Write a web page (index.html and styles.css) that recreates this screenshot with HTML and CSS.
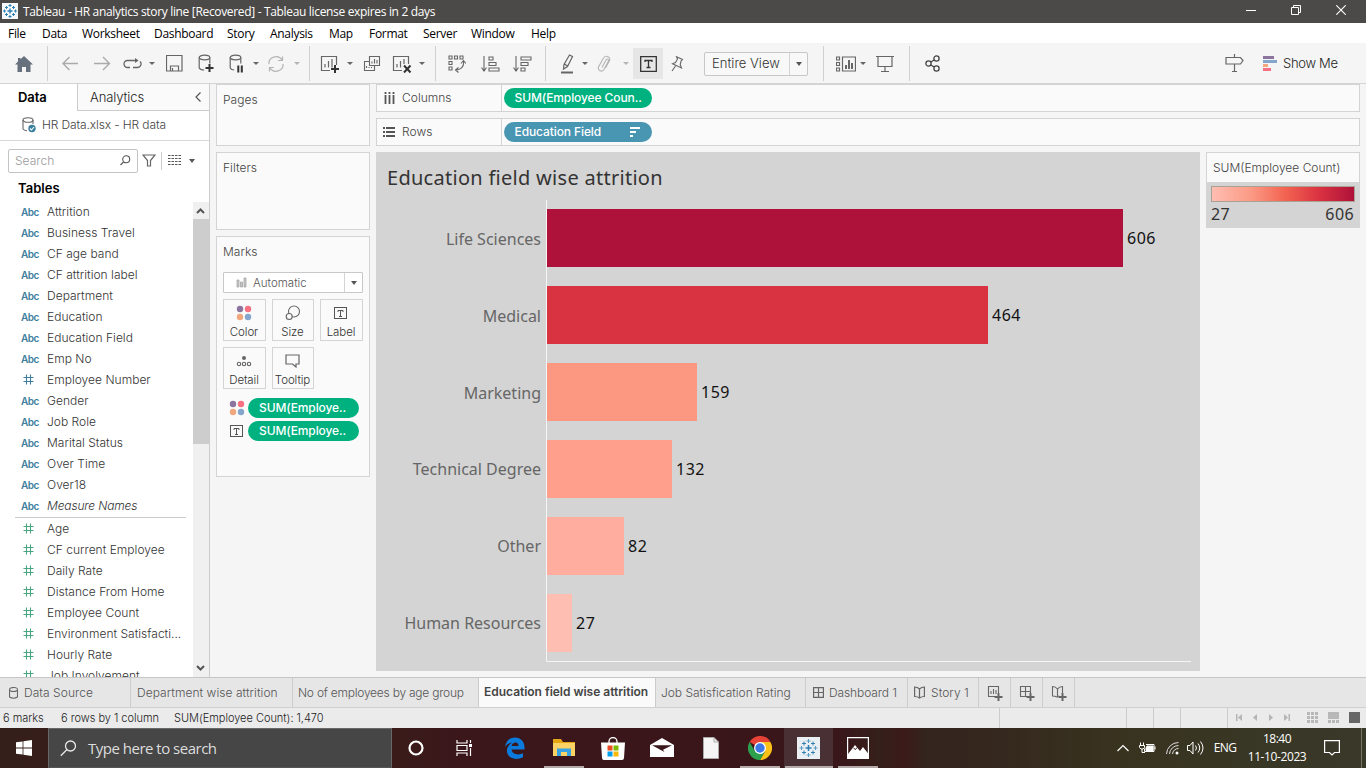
FILE: index.html
```html
<!DOCTYPE html>
<html lang="en">
<head>
<meta charset="utf-8">
<title>Tableau - HR analytics story line</title>
<link rel="stylesheet" href="styles.css">
</head>
<body>
<svg class="defs" width="0" height="0">
  <symbol id="logo" viewBox="0 0 20 20"><path d="M10 7v6M7 10h6" stroke="#2b7fb5" stroke-width="1.5"/><path d="M10 1v4M8 3h4M10 15v4M8 17h4M1 10h4M3 8v4M15 10h4M17 8v4" stroke="#5b9cc4"/><path d="M5.5 3.5v4M3.5 5.5h4M14.500 3.500v4M12.500 5.500h4M5.500 12.500v4M3.500 14.500h4M14.500 12.500v4M12.500 14.500h4" stroke="#357fae"/></symbol>
  <symbol id="num" viewBox="0 0 11 11"><path d="M3.500 .5v10M7.500 .5v10M.5 3.500h10M.5 7.500h10" fill="none" stroke="currentColor" stroke-width="1.100"/></symbol>
  <symbol id="dots" viewBox="0 0 16 16"><circle cx="4" cy="4" r="3.200" fill="#8b759e"/><circle cx="12" cy="4" r="3.200" fill="#f87182"/><circle cx="4" cy="12" r="3.200" fill="#f1a77e"/><circle cx="12" cy="12" r="3.200" fill="#84a6cc"/></symbol>
  <symbol id="tbox" viewBox="0 0 14 14"><rect x=".5" y="1.500" width="12" height="11" fill="none" stroke="#555"/><path d="M4 6V4.500h5V6M6.500 4.500v6M5 10.500h3" fill="none" stroke="#555"/></symbol>
</svg>
<div class="app">
  <header class="title-bar">
    <span class="title-logo"><svg width="14" height="14" viewBox="0 0 14 14" fill="none" stroke="#2f80b2"><path d="M7 4.500v5M4.500 7h5" stroke-width="1.400"/><path d="M7 0v3M5.500 1.500h3M7 11v3M5.500 12.500h3M0 7h3M1.500 5.500v3M11 7h3M12.500 5.500v3M3.500 2v3M2 3.500h3M10.500 2v3M9 3.500h3M3.500 9v3M2 10.500h3M10.500 9v3M9 10.500h3"/></svg></span>
    <span class="title-text">Tableau - HR analytics story line [Recovered] - Tableau license expires in 2 days</span>
    <div class="window-buttons">
      <svg width="10" height="10"><path d="M0 5.500h10" stroke="#fff"/></svg>
      <svg width="10" height="10" fill="none" stroke="#fff"><path d="M.5 2.500h7v7h-7zM2.500 2.500v-2h7v7h-2"/></svg>
      <svg width="10" height="10"><path d="M.3.3l9.400 9.400M9.700.3L.3 9.700" stroke="#fff" stroke-width="1.100"/></svg>
    </div>
  </header>
  <nav class="menu"><span>File</span><span>Data</span><span>Worksheet</span><span>Dashboard</span><span>Story</span><span>Analysis</span><span>Map</span><span>Format</span><span>Server</span><span>Window</span><span>Help</span></nav>
  <div class="toolbar">
    <div class="group g-home"><svg width="18" height="16"><path d="M9 0l9 8.500h-2.500V16H11v-5H7v5H2.500V8.500H0L3 5.500V2h2.500v1.300z" fill="#66717d"/></svg></div>
    <div class="group g-data">
      <svg width="17" height="15" fill="none" stroke="#aaa" stroke-width="1.400"><path d="M16 7.500H1M7.500 1L1 7.500 7.500 14"/></svg>
      <svg width="17" height="15" fill="none" stroke="#aaa" stroke-width="1.400"><path d="M0 7.500h15.500M9 1l6.500 6.500L9 14"/></svg>
      <svg width="19" height="12" fill="none" stroke="#666" stroke-width="1.300"><path d="M7 9.500H4.500A3.500 3.500 0 014.500 2.500h10M10 9.500h4.500A3.500 3.500 0 0017 3.500"/><path d="M12 0v5l3.500-2.500z" fill="#666" stroke="none"/></svg>
      <i class="caret"></i>
      <svg width="17" height="17" fill="none" stroke="#666" stroke-width="1.200"><path d="M.5.500h15.500v15.500H.5zM4.500 16v-5h8v5M6.500 16v-3"/></svg>
      <svg width="17" height="19" fill="none" stroke="#666" stroke-width="1.200"><ellipse cx="6.500" cy="3.500" rx="5.300" ry="2.300"/><path d="M1.200 3.500V14q1 2 5 2M11.800 3.500v6"/><path d="M11.500 10v8M7.500 14h8" stroke="#333" stroke-width="2"/></svg>
      <svg width="17" height="19" fill="none" stroke="#666" stroke-width="1.200"><ellipse cx="7.500" cy="3.500" rx="5.300" ry="2.300"/><path d="M2.200 3.500V14q1 2 4 2M12.800 3.500v6"/><path d="M10.300 11.500v7M13.800 11.500v7" stroke="#333" stroke-width="2"/></svg>
      <i class="caret"></i>
      <svg width="18" height="16" fill="none" stroke="#b4b4b4" stroke-width="1.200"><path d="M2 8A7 6.500 0 0115 4M16 8A7 6.500 0 013 12M15.500.500V4.500H11M2.500 15.500V11.500H7"/></svg>
      <i class="caret pale"></i>
    </div>
    <div class="group g-sheet">
      <svg width="20" height="18" fill="none" stroke="#666" stroke-width="1.200"><path d="M10 15.500H1.500V1.500h15V10M5 12.500V9M8.500 12.500V6M12 12.500V4"/><path d="M15 10v8M11 14h8" stroke="#333" stroke-width="2"/></svg>
      <i class="caret"></i>
      <svg width="18" height="18" fill="none" stroke="#666" stroke-width="1.100"><path d="M6.500 1.500h10v9h-10zM6 6.500H1.500v9h10V11M3.500 13V11M6 13v-1M8.500 13v-1M9 8.500v-2M11.500 8.500V4M14 8.500V5"/></svg>
      <svg width="20" height="18" fill="none" stroke="#666" stroke-width="1.200"><path d="M10 15.500H1.500V1.500h15V9M5 12.500V9M8.500 12.500V6M12 9V4"/><path d="M12 10.500l6.500 7M18.500 10.500l-6.500 7" stroke="#333" stroke-width="2"/></svg>
      <i class="caret"></i>
    </div>
    <div class="group g-sort">
      <svg width="18" height="18" fill="none" stroke="#666" stroke-width="1.100"><path d="M1 1h3v3H1zM6.500 1h3v3h-3zM12 1h3v3h-3zM1 6.500h3v3H1zM1 12h3v3H1zM15.500 6.500q1 7-7 8.500M10.500 12.500L7.500 15l3 2.500M13 8.500l2.500-3L18 8.500"/></svg>
      <svg width="19" height="16" fill="none" stroke="#666" stroke-width="1.100"><path d="M3 0v14M.5 11.500L3 15l2.500-3.500M8 1h4v3H8zM8 6.500h7v3H8zM8 12h10v3H8z"/></svg>
      <svg width="19" height="16" fill="none" stroke="#666" stroke-width="1.100"><path d="M3 0v14M.5 11.500L3 15l2.500-3.500M8 1h10v3H8zM8 6.500h7v3H8zM8 12h4v3H8z"/></svg>
    </div>
    <div class="group g-view">
      <svg width="14" height="20" fill="none" stroke="#666" stroke-width="1.200"><path d="M9.500 1l3 1.500-5 10-4 2.500.5-4.500zM4.500 10l3 2"/><path d="M1 18.500h12" stroke-width="2"/></svg>
      <i class="caret"></i>
      <svg width="14" height="18" fill="none" stroke="#b4b4b4" stroke-width="1.100"><path d="M5 12.500L9 5q1-1.500 2-.8t.3 2L7 14.500q-1.800 2.500-4 1.300T1.500 12L6.500 3Q8.500.5 11 1.700t1.500 4L8.500 13"/></svg>
      <i class="caret pale"></i>
      <span class="mark-toggle"><svg width="17" height="16" fill="none" stroke="#333" stroke-width="1.300"><path d="M.7.700h15.600v14.600H.7zM5 6V4.500h7V6M8.500 4.500v7M6.500 11.500h4"/></svg></span>
      <svg width="14" height="16" fill="none" stroke="#666" stroke-width="1.100"><path d="M6.500.700l6 2.800-1.300 1.300-1 3.700 1.300 3.500-9-4.200 3-1.300 2-3.500zM5.500 10L2 15"/></svg>
      <span class="fit-select"><span>Entire View</span><b><i class="caret big"></i></b></span>
    </div>
    <div class="group g-present">
      <svg width="20" height="16" fill="none" stroke="#666" stroke-width="1.200"><path d="M.5 1h3v3h-3zM.5 6.500h3v3h-3zM.5 12h3v3h-3zM6.500 1h13v14h-13z"/><path d="M10 13V9M13 13V4M16 13V7" stroke-width="2"/></svg>
      <i class="caret"></i>
      <svg width="18" height="18" fill="none" stroke="#666" stroke-width="1.200"><path d="M0 1.500h18M2 1.500v10h14v-10M9 11.500v5M5 16.500h8"/></svg>
    </div>
    <div class="group g-share"><svg width="15" height="17" fill="none" stroke="#444" stroke-width="1.300"><circle cx="3.500" cy="8.500" r="2.600"/><circle cx="11.500" cy="3.500" r="2.600"/><circle cx="11.500" cy="13.500" r="2.600"/><path d="M6 7l3-2M6 10l3 2"/></svg></div>
    <div class="show-me">
      <svg width="19" height="19" fill="none" stroke="#666" stroke-width="1.200"><path d="M1 3.500h14.500l2.500 3-2.500 3.500H1zM9.500 0v3.500M9.500 10v8M7 17.500h5"/></svg>
      <svg class="bars-logo" width="14" height="15"><path d="M0 0h11v3H0z" fill="#8b759e"/><path d="M0 4h14v3H0z" fill="#84a6cc"/><path d="M0 8h5v3H0z" fill="#f1a77e"/><path d="M0 12h8v3H0z" fill="#f87182"/></svg>
      <span>Show Me</span>
    </div>
  </div>

  <main class="work">
    <aside class="data-pane">
      <div class="tabs"><b>Data</b><span>Analytics<svg width="7" height="10" fill="none" stroke="#555" stroke-width="1.200"><path d="M5.500.500L1 5l4.500 4.500"/></svg></span></div>
      <div class="source"><svg width="15" height="16" fill="none" stroke="#666" stroke-width="1.100"><ellipse cx="6" cy="3" rx="5" ry="2.300"/><path d="M1 3v9q1 1.500 4 1.700M11 3v4"/><circle cx="10" cy="11.500" r="3.700" fill="#3b7f9e" stroke="none"/><path d="M8 11.500l1.500 1.500 2.500-3" stroke="#fff"/></svg><span>HR Data.xlsx - HR data</span></div>
      <div class="search-row">
        <div class="search"><span>Search</span><svg width="11" height="11" fill="none" stroke="#555" stroke-width="1.100"><circle cx="6.200" cy="4.300" r="3.500"/><path d="M3.500 7L.5 10"/></svg></div>
        <svg width="14" height="13" fill="none" stroke="#666" stroke-width="1.200"><path d="M1 1h12L8.500 6.500V12h-3V6.500z"/></svg>
        <i class="split"></i>
        <svg width="13" height="11"><path d="M0 .5h13M0 3.500h13M0 6.500h13M0 9.500h13" stroke="#555" stroke-dasharray="2.500 1"/></svg>
        <i class="caret big"></i>
      </div>
      <h2>Tables</h2>
      <div class="list-wrap">
        <ul class="fields">
          <li><em>Abc</em>Attrition</li><li><em>Abc</em>Business Travel</li><li><em>Abc</em>CF age band</li><li><em>Abc</em>CF attrition label</li><li><em>Abc</em>Department</li><li><em>Abc</em>Education</li><li><em>Abc</em>Education Field</li><li><em>Abc</em>Emp No</li>
          <li><svg class="dim" width="11" height="11"><use href="#num"/></svg>Employee Number</li>
          <li><em>Abc</em>Gender</li><li><em>Abc</em>Job Role</li><li><em>Abc</em>Marital Status</li><li><em>Abc</em>Over Time</li><li><em>Abc</em>Over18</li><li class="generated"><em>Abc</em><span>Measure Names</span></li>
          <li class="rule"></li>
          <li><svg width="11" height="11"><use href="#num"/></svg>Age</li>
          <li><svg width="11" height="11"><use href="#num"/></svg>CF current Employee</li>
          <li><svg width="11" height="11"><use href="#num"/></svg>Daily Rate</li>
          <li><svg width="11" height="11"><use href="#num"/></svg>Distance From Home</li>
          <li><svg width="11" height="11"><use href="#num"/></svg>Employee Count</li>
          <li><svg width="11" height="11"><use href="#num"/></svg>Environment Satisfacti...</li>
          <li><svg width="11" height="11"><use href="#num"/></svg>Hourly Rate</li>
          <li><svg width="11" height="11"><use href="#num"/></svg>Job Involvement</li>
        </ul>
        <div class="scroll"><svg width="15" height="17" fill="none" stroke="#555" stroke-width="2"><path d="M4 11l3.500-3.500L11 11"/></svg><i></i><svg width="15" height="17" fill="none" stroke="#555" stroke-width="2"><path d="M4 6l3.500 3.500L11 6"/></svg></div>
      </div>
    </aside>

    <section class="cards">
      <div class="card pages">Pages</div>
      <div class="card filters">Filters</div>
      <div class="card marks"><span>Marks</span>
        <div class="mark-type"><svg width="11" height="11"><path d="M1 3h2v7H1zM4.500 5h2v5h-2zM8 1h2v9H8z" fill="#c8c8c8" stroke="#a5a5a5" stroke-width=".8"/></svg><span>Automatic</span><b><i class="caret big"></i></b></div>
        <div class="mark-grid">
          <div><svg width="16" height="16"><use href="#dots"/></svg>Color</div>
          <div><svg width="16" height="16" fill="none" stroke="#666" stroke-width="1.100"><circle cx="9" cy="6.500" r="5.500"/><circle cx="4.200" cy="11.500" r="3" fill="#fafafa"/></svg>Size</div>
          <div><svg width="14" height="14"><use href="#tbox"/></svg>Label</div>
          <div><svg width="16" height="12" fill="none" stroke="#666" stroke-width="1.100"><circle cx="8" cy="3" r="2" fill="#666" stroke="none"/><circle cx="3" cy="9" r="1.700"/><circle cx="8" cy="9" r="1.700"/><circle cx="13" cy="9" r="1.700"/></svg>Detail</div>
          <div><svg width="15" height="14" fill="none" stroke="#666" stroke-width="1.200"><path d="M1 1h13v9h-3v3L7.500 10H1z"/></svg>Tooltip</div>
        </div>
        <div class="mark-pill"><svg width="16" height="16"><use href="#dots"/></svg><span>SUM(Employe..</span></div>
        <div class="mark-pill"><svg class="label-mark" width="14" height="14"><use href="#tbox"/></svg><span>SUM(Employe..</span></div>
      </div>
    </section>

    <section class="stage">
      <div class="shelf"><div class="shelf-name"><svg width="11" height="12"><path d="M1.500 0v2M5.500 0v2M9.500 0v2M1.500 3v9M5.500 3v9M9.500 3v9" stroke="#555" stroke-width="1.800"/></svg>Columns</div><div class="pill measure">SUM(Employee Coun..</div></div>
      <div class="shelf"><div class="shelf-name"><svg width="12" height="11"><path d="M0 1h2M0 5h2M0 9h2M3 1h9M3 5h9M3 9h9" stroke="#555" stroke-width="2"/></svg>Rows</div><div class="pill dimension">Education Field<svg width="10" height="10"><path d="M0 1h10M0 5h6M0 9h3" stroke="#fff" stroke-width="2"/></svg></div></div>
      <div class="below">
        <div class="viz">
          <h1>Education field wise attrition</h1>
          <div class="chart">
            <div class="row"><span>Life Sciences</span><i class="b1"></i><b>606</b></div>
            <div class="row"><span>Medical</span><i class="b2"></i><b>464</b></div>
            <div class="row"><span>Marketing</span><i class="b3"></i><b>159</b></div>
            <div class="row"><span>Technical Degree</span><i class="b4"></i><b>132</b></div>
            <div class="row"><span>Other</span><i class="b5"></i><b>82</b></div>
            <div class="row"><span>Human Resources</span><i class="b6"></i><b>27</b></div>
          </div>
        </div>
        <div class="legend"><div class="legend-title">SUM(Employee Count)</div><div class="ramp"></div><div class="ends"><span>27</span><span>606</span></div></div>
      </div>
    </section>
  </main>

  <div class="sheets">
    <span class="s-source"><svg width="9" height="12" fill="none" stroke="#666" stroke-width="1.100"><ellipse cx="4.500" cy="2.500" rx="4" ry="2"/><path d="M.5 2.500v7.500q4 2.500 8 0V2.500"/></svg>Data Source</span>
    <span class="s-dept">Department wise attrition</span><span class="s-age">No of employees by age group</span><span class="s-edu">Education field wise attrition</span><span class="s-job">Job Satisfication Rating</span>
    <span class="s-dash"><svg width="11" height="11" fill="none" stroke="#666" stroke-width="1.200"><path d="M.6.600h9.800v9.800H.6zM5.500.500v10M.5 5.500h10"/></svg>Dashboard 1</span>
    <span class="s-story"><svg width="11" height="13" fill="none" stroke="#666" stroke-width="1.200"><path d="M5.500 3v9M.6 1q3 0 4.900 2Q7.500 1 10.400 1v9.500q-3 0-4.900 1.500Q3.500 10.500.6 10.500z"/></svg>Story 1</span>
    <span class="s-new"><svg width="16" height="16" fill="none" stroke="#666" stroke-width="1.100"><path d="M8 11.500H1.500v-10h10V8M4 9V6M6.500 9V4M9 9V5"/><path d="M11.500 8v8M7.500 12h8" stroke-width="2"/></svg></span>
    <span class="s-new"><svg width="16" height="16" fill="none" stroke="#666" stroke-width="1.100"><path d="M8 11.500H1.500v-10h10V8M6.500 1.500v10M1.500 6.500h10"/><path d="M11.500 8v8M7.500 12h8" stroke-width="2"/></svg></span>
    <span class="s-new"><svg width="16" height="16" fill="none" stroke="#666" stroke-width="1.100"><path d="M6.500 4v8M8 11q-2 0-2 1-2-1-4.500-1V1.500q3 0 5 2.500 2-2.500 5-2.500V8"/><path d="M11.500 8v8M7.500 12h8" stroke-width="2"/></svg></span>
  </div>
  <div class="status">
    <span class="st1">6 marks</span><span class="st2">6 rows by 1 column</span><span class="st3">SUM(Employee Count): 1,470</span>
    <div class="status-cells"><i></i><i></i><i></i><i></i>
      <svg class="pager" width="58" height="10" fill="#b5b5b5"><path d="M7 1v7L3 4.500zM1 1h1.500v7H1zM22 1v7l-4-3.500zM34 1v7l4-3.500zM49 1v7l4-3.500zM53.500 1h1.500v7h-1.500z"/></svg>
      <svg class="sizes" width="54" height="12"><path d="M0 0h3v3H0zM4 0h3v3H4zM8 0h3v3H8zM0 4h3v3H0zM4 4h3v3H4zM8 4h3v3H8zM0 8h3v3H0zM4 8h3v3H4zM8 8h3v3H8zM21 0h11v7H21zM21 8h3v3h-3zM25 8h3v3h-3zM29 8h3v3h-3z" fill="#b8b8b8"/><path d="M42 0h11v11H42z" fill="#666"/></svg>
    </div>
  </div>

  <footer class="taskbar">
    <span class="start"><svg width="16" height="16" fill="#fff"><path d="M0 2.300L6.600 1.400V7.600H0zM7.400 1.300L16 0v7.600H7.400zM0 8.400h6.600v6.200L0 13.700zM7.400 8.400H16V16l-8.600-1.300z"/></svg></span>
    <div class="win-search"><svg width="17" height="17" fill="none" stroke="#e8e8e8" stroke-width="1.300"><circle cx="10.500" cy="6" r="5"/><path d="M7 9.500L.8 15.700"/></svg>Type here to search</div>
    <div class="apps">
      <span class="cortana"><svg width="16" height="16"><circle cx="8" cy="8" r="6.500" fill="none" stroke="#fff" stroke-width="2.200"/></svg></span>
      <span class="task-view"><svg width="17" height="16" fill="none" stroke="#fff" stroke-width="1.200"><path d="M1 0v3h10V0M1 5.500h10v5H1zM1 16v-3h10v3M14.500 0v3M14.500 8v8"/><path d="M13 4h3v3h-3z" fill="#fff" stroke="none"/></svg></span>
      <span><svg width="21" height="22"><path d="M1 10C2 3.500 6 .5 11 .5c6 0 9.500 4.500 9.500 9.500v2.500H7.500C8 17 14.500 19 19 16v4.300C10 24.500 2 20 3 12.500 3.500 9.500 5.500 7 8.500 5.500 4.500 6 2.500 8 1 10zM7.500 9h7C14.500 4 8.500 4.500 7.500 9z" fill="#0a7bdc" fill-rule="evenodd"/></svg></span>
      <span class="open"><svg width="22" height="20"><path d="M0 1h8l2 3h12v14H0z" fill="#e5a614"/><path d="M0 5h22v13H0z" fill="#fbd365"/><path d="M4 18v-7.500h14V18h-4v-4H8v4z" fill="#38a3e2"/></svg></span>
      <span><svg width="24" height="23"><path d="M8 7V4.500a4 4 0 018 0V7" fill="none" stroke="#fff" stroke-width="1.300"/><path d="M0 5.500h24L23 21q-.2 2-2 2H3q-2 0-2-2z" fill="#fff"/><path d="M6.500 8.500h5v5h-5z" fill="#e94b25"/><path d="M12.500 8.500h5v5h-5z" fill="#7cb901"/><path d="M6.500 14.500h5v5h-5z" fill="#00a1ea"/><path d="M12.500 14.500h5v5h-5z" fill="#fab807"/></svg></span>
      <span><svg width="24" height="20"><path d="M0 7L12 0l12 7v12H0z" fill="#fff"/><path d="M2 7.200h20l-9 4.600 1.500 2.200z" fill="#3a171a"/></svg></span>
      <span><svg width="16" height="22"><path d="M.5.500h10.500l4.500 4.500v16.500H.5z" fill="#f5f5f5" stroke="#aaa"/><path d="M11 .5V5h4.500" fill="none" stroke="#aaa"/></svg></span>
      <span class="open"><svg width="24" height="24" viewBox="0 0 24 24"><path d="M12 12L1.600 6A12 12 0 0122.400 6z" fill="#e64235"/><path d="M12 12V6h10.400A12 12 0 0112 24l5.200-9z" fill="#fbc116"/><path d="M12 24A12 12 0 011.600 6L6.800 15 17.200 15z" fill="#2da04e"/><circle cx="12" cy="12" r="6" fill="#fff"/><circle cx="12" cy="12" r="4.700" fill="#3d78e6"/></svg></span>
      <span class="open active"><svg class="tile" width="23" height="22" viewBox="-1 -1 22 22"><use href="#logo" width="20" height="20"/></svg></span>
      <span class="open"><svg width="22" height="22"><path d="M.6.600h20.800v20.800H.6z" fill="none" stroke="#fff" stroke-width="1.200"/><path d="M1 17l7-9 5 6 3-4 5.500 7v4H1z" fill="#fff"/><path d="M6.500 11l2 1.500 1.500-2" fill="none" stroke="#3a171a"/></svg></span>
    </div>
    <div class="tray">
      <svg width="12" height="8" fill="none" stroke="#fff" stroke-width="1.200"><path d="M.5 7L6 1.500 11.500 7"/></svg>
      <svg width="17" height="13" fill="none" stroke="#fff"><path d="M7 2.500h8v7H5.500v-3M16 4.500v3"/><path d="M8 4h6v4.500H7V6z" fill="#fff"/><path d="M1.500.500v3M4.500.500v3M.5 3.500h5v2l-1.500 1.500h-2L.5 5.500zM3 7v3.500h3"/></svg>
      <svg width="13" height="13" fill="none" stroke="#ddd"><path d="M.5 12A12 12 0 0112.500.5M3.500 12A9 9 0 0112.500 3.500M6.500 12a6 6 0 016-5.500"/><circle cx="11" cy="11" r="1.500" fill="#fff" stroke="none"/></svg>
      <svg width="17" height="14" fill="none" stroke="#fff"><path d="M.5 4.500h2.500l3-3.500v12l-3-3.500H.5zM8.500 4.500q2 2.500 0 5M11 2.500q3.500 4.500 0 9M13.500.500q5 6.500 0 13"/></svg>
      <span class="lang">ENG</span>
      <span class="clock">18:40<br><small>11-10-2023</small></span>
      <svg width="16" height="16" fill="none" stroke="#fff" stroke-width="1.200"><path d="M.6.600h14.800v11.900h-4.900L8 15 5.500 12.500H.6z"/></svg>
    </div>
  </footer>
</div>
</body>
</html>
```
FILE: styles.css
```css
* { box-sizing: border-box; }
body { margin: 0; overflow: hidden; font: 350 12px/16px Inter, "Noto Sans", sans-serif; letter-spacing: .02px; color: #333; background: #f5f5f5; }
.defs { position: absolute; }
svg { display: block; flex: none; }
.app { width: 1366px; height: 768px; display: grid; grid-template-rows: 23px 20px 41px 593px 31px 20px 40px; white-space: nowrap; }
.caret { display: block; border: 3px solid transparent; border-top-color: #666; border-bottom: 0; width: 0; height: 0; }
.caret.pale { border-top-color: #b4b4b4; }
.caret.big { border-width: 4px 3.500px 0; border-top-color: #555; }

.title-bar { background: #4c4a48; color: #fff; display: flex; align-items: center; font: 12px/22px "Open Sans", "Noto Sans", sans-serif; padding-left: 2px; }
.title-logo { width: 16px; height: 16px; background: #f4f8fa; padding: 1px; margin-bottom: 2px; }
.title-text { margin-left: 5px; letter-spacing: -.33px; }
.window-buttons { margin-left: auto; display: flex; gap: 35px; padding: 0 20px 3px 0; }

.menu { background: #fff; color: #000; display: grid; grid-template-columns: 34px 40px 72px 73px 43px 59px 40px 54px 48px 60px 40px; padding-left: 8px; font: 12px/21px "Open Sans", "Noto Sans", sans-serif; letter-spacing: -.3px; }

.toolbar { display: flex; border-bottom: 1px solid #d4d4d4; background: #f5f5f5; }
.group { display: grid; align-items: center; justify-items: center; height: 35px; margin-top: 3px; border-right: 1px solid #d0d0d0; }
.g-home { width: 48px; }
.g-data { width: 262px; grid-template-columns: 30px 34px 26px 14px 30px 34px 26px 14px 26px 16px; padding-left: 7px; justify-content: start; }
.g-sheet { width: 126px; grid-template-columns: 26px 14px 30px 30px 10px; padding-left: 7px; justify-content: start; }
.g-sort { width: 110px; grid-template-columns: 32px 34px 30px; padding-left: 5px; justify-content: start; }
.g-view { width: 278px; grid-template-columns: 28px 8px 30px 14px 30px 28px 104px; padding-left: 7px; justify-content: start; }
.g-view .fit-select { margin-left: 26px; }
.g-present { width: 86px; grid-template-columns: 26px 8px 36px; padding-left: 9px; justify-content: start; }
.g-share { width: 44px; border: 0; }
.mark-toggle { width: 30px; height: 31px; background: #e6e6e6; display: grid; place-items: center; }
.fit-select { width: 104px; height: 24px; border: 1px solid #c8c8c8; border-radius: 2px; display: flex; font-size: 13px; line-height: 21px; padding-left: 7px; background: #f8f8f8; justify-content: space-between; }
.fit-select b { width: 18px; border-left: 1px solid #d4d4d4; display: grid; place-items: center; }
.show-me { margin-left: auto; display: flex; align-items: center; width: 141px; font-size: 13px; letter-spacing: -.3px; color: #222; }
.bars-logo { margin: 0 6px 0 19px; }

.work { display: flex; overflow: hidden; min-height: 0; }
.data-pane { width: 210px; background: #fff; border-right: 1px solid #ccc; display: grid; grid-template-rows: 27px 30px 38px 22px 1fr; min-height: 0; }
.tabs { display: flex; font-size: 13px; letter-spacing: -.1px; color: #222; line-height: 26px; }
.tabs b { width: 77px; padding-left: 18px; font-weight: 600; color: #000; }
.tabs span { flex: 1; display: flex; justify-content: space-between; align-items: center; padding: 0 7px 0 12px; border-left: 1px solid #ccc; border-bottom: 1px solid #ccc; background: #fafafa; }
.source { display: flex; align-items: center; gap: 5px; padding-left: 22px; border-bottom: 1px solid #d8d8d8; color: #444; padding-bottom: 1px; letter-spacing: -.12px; }
.search-row { display: flex; align-items: center; padding: 1px 0 0 8px; }
.search { width: 130px; height: 24px; border: 1px solid #c4c4c4; border-radius: 2px; display: flex; align-items: center; justify-content: space-between; padding: 0 6px; color: #999; margin-right: 4px; }
.search-row > svg { margin-bottom: 1px; }
.split { height: 18px; border-left: 1px solid #ccc; margin: 0 6px 0 5px; }
.search-row .caret { margin-left: 8px; }
h2 { margin: 0; padding-left: 18px; font-size: 13px; line-height: 18px; color: #000; font-weight: 600; }
.list-wrap { display: flex; justify-content: space-between; overflow: hidden; min-height: 0; padding-top: 1px; }
.fields { margin: -1px 0 0; padding: 0 0 0 15px; list-style: none; width: 186px; }
.fields li { height: 21px; line-height: 21px; display: grid; grid-template: 21px / 32px 1fr; align-items: center; color: #333; }
.fields em { font: 600 10px/19px Inter, sans-serif; letter-spacing: -.5px; color: #3e7e9c; padding: 2px 0 0 6px; }
.fields svg { color: #4aa583; margin-left: 8px; }
.fields .dim { color: #3e7e9c; }
.fields .generated span { font-style: italic; letter-spacing: -.15px; }
.fields .rule { height: 1px; background: #ccc; margin: 1px 0 0; }
.scroll { width: 16px; background: #f0f0f0; display: flex; flex-direction: column; }
.scroll i { height: 225px; background: #cdcdcd; margin-bottom: auto; }

.cards { width: 154px; margin-left: 6px; display: flex; flex-direction: column; gap: 6px; }
.card { border: 1px solid #d4d4d4; background: #fafafa; padding: 7px 6px; color: #444; }
.pages { height: 62px; }
.filters { height: 78px; }
.marks { height: 241px; }
.mark-type { height: 21px; margin-top: 12px; border: 1px solid #c8c8c8; border-radius: 1px; display: flex; align-items: center; padding-left: 12px; gap: 6px; background: #fff; font-size: 11.500px; color: #555; }
.mark-type b { width: 18px; height: 19px; margin-left: auto; border-left: 1px solid #d4d4d4; display: grid; place-items: center; }
.mark-grid { display: grid; grid-template-columns: 43px 42px 43px; grid-auto-rows: 42px; gap: 6px; margin-top: 6px; font-size: 11.500px; letter-spacing: -.1px; color: #333; }
.mark-grid div { border: 1px solid #d4d4d4; display: grid; grid-template-rows: 25px 15px; place-items: center; line-height: 15px; padding-right: 1px; }
.mark-pill { display: grid; grid-template-columns: 25px 111px; align-items: center; height: 23px; }
.mark-grid + .mark-pill { margin-top: 7px; }
.mark-pill svg { margin-left: 6px; }
.mark-pill .label-mark { margin-left: 7px; }
.mark-pill span { background: #00b180; color: #fff; border-radius: 10px; height: 20px; line-height: 20px; padding-left: 11px; font-weight: 500; letter-spacing: -.1px; }

.stage { width: 984px; margin-left: 6px; }
.shelf { height: 28px; margin-bottom: 6px; border: 1px solid #d4d4d4; background: #fafafa; display: flex; align-items: center; }
.shelf-name { width: 125px; height: 26px; border-right: 1px solid #d4d4d4; display: flex; align-items: center; gap: 7px; padding-left: 7px; color: #444; }
.shelf:nth-child(2) .shelf-name { padding-left: 6px; }
.pill { width: 148px; height: 20px; border-radius: 10px; margin-left: 2px; line-height: 20px; padding: 0 12px 0 10.500px; color: #fff; display: flex; align-items: center; justify-content: space-between; font-weight: 500; letter-spacing: -.1px; }
.measure { background: #00b180; }
.dimension { background: #4996b2; }
.below { display: flex; gap: 6px; align-items: flex-start; }
.viz { width: 824px; height: 519px; background: #d4d4d4; padding: 13px 9px 0 11px; }
h1 { margin: 0; font: 400 20px/26px "Noto Sans", sans-serif; letter-spacing: .28px; color: #333; }
.chart { width: 804px; height: 462px; margin-top: 9px; padding-top: 9px; display: grid; grid-template-rows: repeat(6, 77px); background: linear-gradient(#f5f5f5, #f5f5f5) 159px 0 / 1px 462px no-repeat, linear-gradient(#f5f5f5, #f5f5f5) 159px 461px / 645px 1px no-repeat; }
.row { display: grid; grid-template-columns: 154px auto 1fr; height: 58px; align-items: center; font: 16px/22px "Noto Sans", sans-serif; letter-spacing: 0; }
.row span { text-align: right; color: #666; }
.row:nth-child(-n+3) span { padding-top: 2px; }
.row i { height: 58px; margin-left: 6px; }
.row b { margin-left: 4px; font-weight: 400; letter-spacing: .5px; color: #111; }
.b1 { width: 576px; background: #ae123a; }
.b2 { width: 441px; background: #d93240; }
.b3 { width: 150px; background: #fc9781; }
.b4 { width: 125px; background: #ff9f8c; }
.b5 { width: 77px; background: #ffad9e; }
.b6 { width: 25px; background: #ffbeb2; }
.legend { width: 154px; height: 76px; background: #d4d4d4; border: 1px solid #d4d4d4; color: #444; letter-spacing: 0; }
.legend-title { background: #fafafa; height: 29px; line-height: 29px; padding-left: 6px; }
.ramp { height: 16px; margin: 4px; border: 1px solid #aaa195; background: linear-gradient(90deg, #ffbeb2, #fb9984 28%, #f26250 52%, #d93141 76%, #ae123a); }
.ends { display: flex; justify-content: space-between; padding: 0 5px 0 4px; font: 16px/17px "Noto Sans", sans-serif; letter-spacing: .4px; color: #333; }

.sheets { display: flex; background: #e6e6e6; border-top: 1px solid #c6c6c6; border-bottom: 1px solid #d0d0d0; color: #555; line-height: 29px; letter-spacing: .05px; }
.sheets span { border-right: 1px solid #ccc; display: flex; align-items: center; padding-left: 6px; gap: 6px; }
.sheets .s-source { width: 131px; padding-left: 9px; }
.s-dept { width: 162px; }
.sheets .s-age { width: 186px; padding-left: 5px; letter-spacing: -.24px; }
.sheets .s-edu { width: 177px; padding-left: 5px; background: #fafafa; font-weight: 600; color: #444; line-height: 28px; align-items: flex-start; letter-spacing: -.02px; }
.sheets .s-job { width: 150px; padding-left: 5px; letter-spacing: -.03px; }
.sheets .s-dash { width: 102px; padding-left: 7px; gap: 5px; letter-spacing: -.1px; }
.s-story { width: 71px; }
.sheets .s-new { width: 32px; justify-content: center; padding: 0; }

.status { background: #ebebeb; display: flex; font-size: 11px; letter-spacing: -.02px; line-height: 20px; color: #222; padding-left: 3px; }
.st1 { width: 58px; }
.st2 { width: 113px; }
.status-cells { margin-left: auto; width: 367px; display: grid; grid-template-columns: 127px 27px 27px 47px 71px 68px; border-left: 1px solid #ccc; align-items: center; }
.status-cells > i { height: 20px; border-right: 1px solid #ccc; }
.pager { margin-left: 7px; }
.status-cells .sizes { margin-left: 8px; }

.taskbar { display: flex; color: #fff; background: linear-gradient(90deg, #351f1a 0, #3a1b1a 400px, #3b161a 470px, #39161a 840px, #35201b 880px, #3b1a1a 905px, #33241e 925px, #35281e 1000px, #38331f 1120px, #39392a 1366px); font-family: "Open Sans", "Noto Sans", sans-serif; font-weight: 400; }
.start { width: 48px; display: grid; place-items: center; }
.win-search { width: 344px; background: #464646; border: 1px solid #686868; border-bottom-color: #555; display: flex; align-items: center; gap: 11px; padding-left: 11px; font-size: 15px; color: #ddd; letter-spacing: -.5px; }
.win-search { letter-spacing: -.5px; }
.apps { display: grid; grid-template-columns: repeat(10, 49px); }
.apps span { display: grid; place-items: center; }
.apps .cortana { padding-right: 2px; }
.apps .task-view { padding-right: 3px; }
.apps .open { background: linear-gradient(#b5aaaa, #b5aaaa) center bottom / 40px 2px no-repeat; }
.apps .active { background: linear-gradient(#b5aaaa, #b5aaaa) center bottom / 48px 2px no-repeat, #493034; }
.tile { background: #e9eff2; }
.tray { margin-left: auto; width: 245px; display: grid; align-items: center; justify-items: center; grid-template-columns: 12px 36px 14px 32px 28px 76px 34px; border-right: 1px solid #777662; margin-right: 4px; font-size: 12px; }
.tray .lang { letter-spacing: -.6px; }
.clock { text-align: center; line-height: 18px; letter-spacing: -.5px; }
.clock small { font-size: 12px; letter-spacing: -.4px; }
```
